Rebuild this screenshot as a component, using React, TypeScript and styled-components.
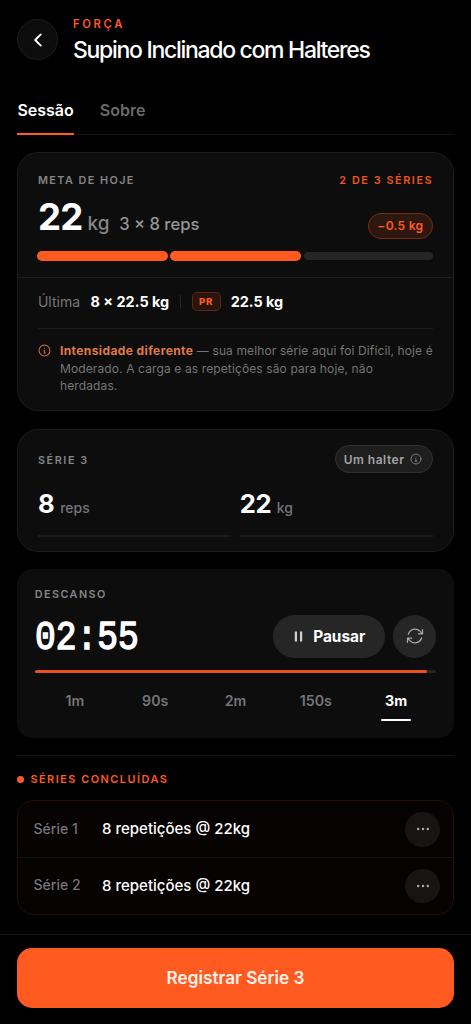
import React from "react";
import styled, { createGlobalStyle } from "styled-components";

const ORANGE = "#ff5a1f";

const GlobalStyle = createGlobalStyle`
  *, *::before, *::after { box-sizing: border-box; }
  body { margin: 0; background: #000; }
  button { font: inherit; color: inherit; border: 0; padding: 0; background: none; }
`;

const Screen = styled.div`
  display: flex;
  flex-direction: column;
  width: 100%;
  height: 1024px;
  background: #000;
  color: #fff;
  font-family: Inter, "Liberation Sans", sans-serif;
  white-space: nowrap;
  overflow: hidden;
`;

const Content = styled.main`
  flex: 1;
  padding: 0 17.4px;
`;

const Header = styled.header`
  display: flex;
  gap: 14.6px;
  height: 92px;
  padding-top: 19.4px;
`;

const BackButton = styled.button`
  display: grid;
  place-items: center;
  width: 41px;
  height: 41px;
  border-radius: 50%;
  border: 1px solid #1d1d1d;
  background: #0d0d0d;
`;

const Heading = styled.div`
  display: flex;
  flex-direction: column;
  margin-top: -4.4px;
`;

const Text = styled.span<{ $size: number; $weight?: number; $color?: string; $track?: number; $line?: number }>`
  font-size: ${(p) => p.$size}px;
  font-weight: ${(p) => p.$weight ?? 600};
  color: ${(p) => p.$color ?? "#fff"};
  letter-spacing: ${(p) => p.$track ?? 0}px;
  line-height: ${(p) => (p.$line ? `${p.$line}px` : "normal")};
`;

const Title = styled.h1`
  margin: 3px 0 0;
  font-size: 23px;
  font-weight: 500;
  line-height: 28px;
  letter-spacing: -1.3px;
`;

const Tabs = styled.nav`
  display: flex;
  gap: 26px;
  height: 43px;
  border-bottom: 1px solid #161616;
`;

const Tab = styled.button<{ $active?: boolean }>`
  height: 43px;
  padding-bottom: 6px;
  font-size: 16px;
  font-weight: 600;
  color: ${(p) => (p.$active ? "#fff" : "#6b6b6b")};
  border-bottom: 2px solid ${(p) => (p.$active ? ORANGE : "transparent")};
`;

const Card = styled.section`
  border: 1px solid #1c1c1c;
  border-radius: 21px;
  background: #0d0d0d;
`;

const GoalCard = styled(Card)`
  height: 259px;
  margin-top: 17.3px;
`;

const GoalTop = styled.div`
  height: 124.6px;
  padding: 17px 19.5px 0;
  border-bottom: 1px solid #1c1c1c;
`;

const Row = styled.div`
  display: flex;
  align-items: center;
  justify-content: space-between;
`;

const GoalRow = styled(Row)`
  height: 49px;
  margin-top: 3px;
  align-items: flex-start;
`;

const Measure = styled.div`
  display: flex;
  align-items: baseline;
`;

const Unit = styled(Text)`
  margin-left: 5px;
`;

const Scheme = styled(Text)`
  margin-left: 9.6px;
`;

const Delta = styled.span`
  display: grid;
  place-items: center;
  width: 65.5px;
  height: 26px;
  margin-top: 19px;
  padding-bottom: 1px;
  border: 1px solid #73300f;
  border-radius: 13px;
  background: #2e170e;
  color: ${ORANGE};
  font-size: 12px;
  font-weight: 600;
  letter-spacing: 0.3px;
`;

const Segments = styled.div`
  display: flex;
  gap: 4.4px;
  margin-top: 8.6px;
`;

const Segment = styled.i<{ $done?: boolean }>`
  flex: 1;
  height: 8px;
  border-radius: 5px;
  background: ${(p) => (p.$done ? ORANGE : "#262626")};
  box-shadow: ${(p) => (p.$done ? `0 0 0 1px ${ORANGE}` : "none")};
`;

const History = styled.div`
  display: flex;
  align-items: center;
  height: 51.1px;
  margin: 0 19.5px;
  padding-bottom: 2px;
  border-bottom: 1px solid #1c1c1c;
`;

const LastSet = styled(Text)`
  margin-left: 10.6px;
`;

const Divider = styled.i`
  width: 1px;
  height: 13px;
  margin: 0 11px 0 10.5px;
  background: #262626;
`;

const RecordBadge = styled.span`
  display: grid;
  place-items: center;
  width: 29px;
  height: 19px;
  margin-right: 10px;
  border: 1px solid #5e280f;
  border-radius: 5px;
  background: #2a150d;
  color: ${ORANGE};
  font-size: 9.6px;
  font-weight: 800;
  letter-spacing: 0.8px;
`;

const Note = styled.div`
  display: flex;
  gap: 8.8px;
  padding: 13px 0 0 19.8px;
  color: #757575;
  font-size: 12px;
  line-height: 17.6px;
  letter-spacing: 0.12px;
  svg { margin-top: 2.4px; }
  b { color: #e07a4b; font-weight: 700; letter-spacing: 0.4px; }
`;

const SetCard = styled(Card)`
  height: 123px;
  margin-top: 17.3px;
  padding: 15.6px 19.5px 0;
`;

const HandPill = styled.span`
  display: flex;
  align-items: center;
  justify-content: center;
  gap: 5.6px;
  width: 98.5px;
  height: 28px;
  padding-right: 2px;
  border: 1px solid #303030;
  border-radius: 14px;
  background: #1e1e1e;
  color: #a3a3a3;
  font-size: 12px;
  font-weight: 600;
  letter-spacing: 0.5px;
`;

const SetLabel = styled(Text)`
  padding-top: 2.4px;
`;

const Fields = styled.div`
  display: grid;
  grid-template-columns: 1fr 1fr;
  gap: 8.6px;
`;

const Field = styled.div`
  display: flex;
  align-items: baseline;
  gap: 5.6px;
  height: 63.9px;
  padding-top: 15.2px;
  border-bottom: 2px solid #1b1b1b;
`;

const RestCard = styled.section`
  height: 169px;
  margin-top: 17.4px;
  padding: 18.3px 17.4px 0;
  border-radius: 15px;
  background: #0d0d0d;
`;

const TimerRow = styled.div`
  display: flex;
  align-items: center;
  height: 43px;
  margin-top: 12.7px;
`;

const Clock = styled.span`
  flex: 1;
  padding-top: 3.4px;
  font-family: "Liberation Mono", monospace;
  font-size: 40px;
  font-weight: 400;
  line-height: 43px;
  -webkit-text-stroke: 1.5px #fff;
  transform: scaleX(0.865);
  transform-origin: left center;
`;

const PauseButton = styled.button`
  display: flex;
  align-items: center;
  justify-content: center;
  gap: 9px;
  width: 112px;
  height: 43px;
  padding-left: 2px;
  border-radius: 22px;
  background: #262626;
  font-size: 15.4px;
  font-weight: 700;
`;

const RoundButton = styled.button<{ $size: number; $bg: string }>`
  display: grid;
  place-items: center;
  width: ${(p) => p.$size}px;
  height: ${(p) => p.$size}px;
  border-radius: 50%;
  background: ${(p) => p.$bg};
  color: #a8a8a8;
`;

const ResetButton = styled(RoundButton)`
  margin-left: 8.5px;
`;

const Progress = styled.div`
  height: 2.6px;
  margin-top: 12.5px;
  border-radius: 2px;
  background: #262626;
`;

const ProgressFill = styled.div`
  height: 100%;
  border-radius: 2px;
  background: #e8501c;
`;

const Presets = styled.div`
  display: grid;
  grid-template-columns: repeat(5, 1fr);
  justify-items: center;
  margin-top: 13px;
`;

const Preset = styled.button<{ $active?: boolean }>`
  position: relative;
  height: 34.8px;
  min-width: 30px;
  padding-bottom: 5.4px;
  color: ${(p) => (p.$active ? "#fff" : "#757579")};
  font-size: 14.2px;
  font-weight: ${(p) => (p.$active ? 700 : 600)};
  &::after {
    content: "";
    position: absolute;
    left: 0;
    right: 0;
    bottom: 0;
    height: 2.2px;
    border-radius: 2px;
    background: ${(p) => (p.$active ? "#fff" : "transparent")};
  }
`;

const Done = styled.section`
  margin-top: 17px;
  border-top: 1px solid #161616;
`;

const DoneTitle = styled.div`
  display: flex;
  align-items: center;
  gap: 6px;
  height: 44.3px;
  padding-top: 2.8px;
`;

const Dot = styled.i`
  width: 7px;
  height: 7px;
  margin-bottom: 1px;
  border-radius: 50%;
  background: ${ORANGE};
`;

const DoneList = styled.div`
  height: 114.3px;
  border: 1px solid #260f06;
  border-radius: 16px;
  background: #050201;
`;

const DoneRow = styled.div`
  display: flex;
  align-items: center;
  height: 56px;
  padding: 0 12.8px 0 15.2px;
  & + & { height: 56.4px; border-top: 1px solid #151312; }
`;

const DoneLabel = styled(Text)`
  width: 68.5px;
  padding-bottom: 2px;
`;

const DoneValue = styled(Text)`
  flex: 1;
  padding-bottom: 0.6px;
`;

const Footer = styled.footer`
  height: 90px;
  padding: 13px 17.4px 0;
  border-top: 1px solid #161616;
`;

const Submit = styled.button`
  width: 100%;
  height: 60px;
  padding-bottom: 1px;
  border-radius: 15px;
  background: ${ORANGE};
  color: #fff2ec;
  font-size: 17.2px;
  font-weight: 600;
`;

const InfoIcon = ({ size, color, width = 2 }: { size: number; color: string; width?: number }) => (
  <svg width={size} height={size} viewBox="0 0 24 24" fill="none" stroke={color} strokeWidth={width} strokeLinecap="round" strokeLinejoin="round">
    <circle cx="12" cy="12" r="10" />
    <path d="M12 8h.01M11 12h1v4.5M10.8 16.5h2.6" />
  </svg>
);

const DotsIcon = () => (
  <svg width="14" height="4" viewBox="0 0 14 4" fill="#a8a8a8">
    <circle cx="2.2" cy="2" r="1.25" />
    <circle cx="7" cy="2" r="1.25" />
    <circle cx="11.8" cy="2" r="1.25" />
  </svg>
);

const presets = ["1m", "90s", "2m", "150s", "3m"];

export default function App() {
  return (
    <Screen>
      <GlobalStyle />
      <Content>
        <Header>
          <BackButton aria-label="Voltar">
            <svg width="20" height="20" viewBox="0 0 20 20" fill="none" stroke="#fff" strokeWidth="1.9" strokeLinecap="round" strokeLinejoin="round">
              <path d="M12.8 4.4 7.2 10l5.6 5.6" />
            </svg>
          </BackButton>
          <Heading>
            <Text $size={11.2} $color={ORANGE} $track={2.7} $line={18}>FORÇA</Text>
            <Title>Supino Inclinado com Halteres</Title>
          </Heading>
        </Header>
        <Tabs>
          <Tab $active>Sessão</Tab>
          <Tab>Sobre</Tab>
        </Tabs>

        <GoalCard>
          <GoalTop>
            <Row>
              <Text $size={10.8} $color="#858585" $track={1.46} $line={21}>META DE HOJE</Text>
              <Text $size={10.8} $color="#f0541e" $track={1.58} $line={21}>2 DE 3 SÉRIES</Text>
            </Row>
            <GoalRow>
              <Measure>
                <Text $size={36.6} $weight={700} $track={-0.7} $line={46}>22</Text>
                <Unit $size={19} $weight={500} $color="#858585">kg</Unit>
                <Scheme $size={16.6} $weight={500} $color="#969696">3 × 8 reps</Scheme>
              </Measure>
              <Delta>−0.5 kg</Delta>
            </GoalRow>
            <Segments>
              <Segment $done />
              <Segment $done />
              <Segment />
            </Segments>
          </GoalTop>
          <History>
            <Text $size={14} $weight={400} $color="#757575">Última</Text>
            <LastSet $size={14.4} $weight={700}>8 × 22.5 kg</LastSet>
            <Divider />
            <RecordBadge>PR</RecordBadge>
            <Text $size={14.4} $weight={700}>22.5 kg</Text>
          </History>
          <Note>
            <InfoIcon size={13} color="#c9683d" />
            <div>
              <b>Intensidade diferente</b> — sua melhor série aqui foi Difícil, hoje é<br />
              Moderado. A carga e as repetições são para hoje, não<br />
              herdadas.
            </div>
          </Note>
        </GoalCard>

        <SetCard>
          <Row>
            <SetLabel $size={10.8} $color="#858585" $track={1.6} $line={17}>SÉRIE 3</SetLabel>
            <HandPill>
              Um halter
              <InfoIcon size={12} color="#858585" width={1.8} />
            </HandPill>
          </Row>
          <Fields>
            <Field>
              <Text $size={25.6} $weight={700}>8</Text>
              <Text $size={14} $weight={500} $color="#757579">reps</Text>
            </Field>
            <Field>
              <Text $size={25.6} $weight={700} $track={-0.4}>22</Text>
              <Text $size={14} $weight={500} $color="#757579">kg</Text>
            </Field>
          </Fields>
        </SetCard>

        <RestCard>
          <Row>
            <Text $size={10.8} $color="#858585" $track={1.45} $line={15}>DESCANSO</Text>
          </Row>
          <TimerRow>
            <Clock>02:55</Clock>
            <PauseButton>
              <svg width="10" height="11" viewBox="0 0 10 11" fill="#d0d0d0">
                <path d="M.8.5h2.2v10H.8zM6 .5h2.2v10H6z" />
              </svg>
              Pausar
            </PauseButton>
            <ResetButton $size={43} $bg="#262626" aria-label="Reiniciar">
              <svg width="20" height="20" viewBox="0 0 24 24" fill="none" stroke="currentColor" strokeWidth="1.5" strokeLinecap="round" strokeLinejoin="round">
                <path d="M16.023 9.348h4.992v-.001M2.985 19.644v-4.992m0 0h4.992m-4.993 0 3.181 3.183a8.25 8.25 0 0 0 13.803-3.7M4.031 9.865a8.25 8.25 0 0 1 13.803-3.7l3.181 3.182m0-4.991v4.99" />
              </svg>
            </ResetButton>
          </TimerRow>
          <Progress>
            <ProgressFill style={{ width: "97.6%" }} />
          </Progress>
          <Presets>
            {presets.map((p) => (
              <Preset key={p} $active={p === "3m"}>{p}</Preset>
            ))}
          </Presets>
        </RestCard>

        <Done>
          <DoneTitle>
            <Dot />
            <Text $size={10.8} $color={ORANGE} $track={1.56} $line={15}>SÉRIES CONCLUÍDAS</Text>
          </DoneTitle>
          <DoneList>
            {[1, 2].map((n) => (
              <DoneRow key={n}>
                <DoneLabel $size={14} $weight={500} $color="#757579">Série {n}</DoneLabel>
                <DoneValue $size={15} $weight={500}>8 repetições @ 22kg</DoneValue>
                <RoundButton $size={34.5} $bg="#171514" aria-label="Mais opções">
                  <DotsIcon />
                </RoundButton>
              </DoneRow>
            ))}
          </DoneList>
        </Done>
      </Content>
      <Footer>
        <Submit>Registrar Série 3</Submit>
      </Footer>
    </Screen>
  );
}
